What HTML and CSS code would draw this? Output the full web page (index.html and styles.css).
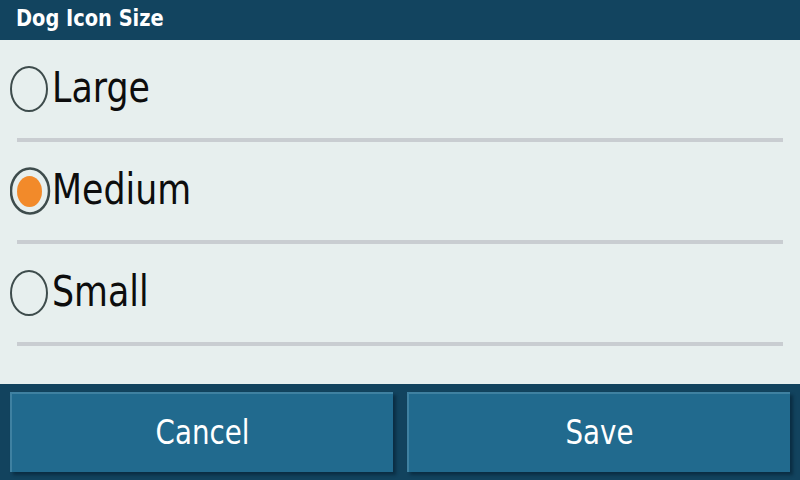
FILE: index.html
```html
<!DOCTYPE html>
<html>
<head>
<meta charset="utf-8">
<link rel="stylesheet" href="styles.css">
</head>
<body>
<div class="screen">
  <div class="titlebar"><span class="title">Dog Icon Size</span></div>
  <div class="content">
    <div class="row">
      <svg class="radio" width="42" height="48" viewBox="0 0 42 48"><ellipse cx="19" cy="24" rx="18" ry="22" fill="none" stroke="#3e4c4c" stroke-width="2"/></svg>
      <span class="label">Large</span>
    </div>
    <div class="divider"></div>
    <div class="row">
      <svg class="radio" width="42" height="48" viewBox="0 0 42 48"><ellipse cx="20" cy="24" rx="19" ry="22.5" fill="none" stroke="#3e4c4c" stroke-width="2.5"/><ellipse cx="19.5" cy="24.5" rx="12.5" ry="15.5" fill="#f28a2a"/></svg>
      <span class="label">Medium</span>
    </div>
    <div class="divider"></div>
    <div class="row">
      <svg class="radio" width="42" height="48" viewBox="0 0 42 48"><ellipse cx="19" cy="24" rx="18" ry="22" fill="none" stroke="#3e4c4c" stroke-width="2"/></svg>
      <span class="label">Small</span>
    </div>
    <div class="divider"></div>
  </div>
  <div class="footer">
    <button class="btn"><span class="btn-text">Cancel</span></button>
    <button class="btn"><span class="btn-text">Save</span></button>
  </div>
</div>
</body>
</html>
```
FILE: styles.css
```css
* { box-sizing: border-box; }
html, body { margin: 0; padding: 0; }
body {
  width: 800px;
  height: 480px;
  overflow: hidden;
  font-family: "DejaVu Sans", sans-serif;
  background: #e7efee;
}
.screen {
  width: 800px;
  height: 480px;
  display: flex;
  flex-direction: column;
}
.titlebar {
  height: 40px;
  background: #12445f;
  padding-left: 16px;
  display: flex;
  align-items: center;
}
.title {
  display: inline-block;
  color: #ffffff;
  font-weight: bold;
  font-size: 19.4px;
  line-height: 22px;
  transform: scaleY(1.2);
  margin-top: -2px;
}
.content {
  flex: 1;
  background: #e7efee;
}
.row {
  height: 98px;
  display: flex;
  align-items: center;
  padding-left: 10px;
}
.radio {
  display: block;
  flex: none;
  margin-top: 0;
}
.label {
  display: inline-block;
  font-size: 34.8px;
  line-height: 40px;
  color: #0d0d0d;
  transform: scaleY(1.2);
  margin-top: -2px;
}
.divider {
  height: 4px;
  margin: 0 17px;
  background: #c9cdd1;
}
.footer {
  height: 96px;
  background: #12435e;
  display: flex;
  gap: 14px;
  padding: 8px 10px;
}
.btn {
  flex: 1;
  height: 80px;
  margin: 0;
  padding: 0;
  border: none;
  border-top: 2px solid #3f81a1;
  border-left: 2px solid #3f81a1;
  background: #216a8e;
  box-shadow: 3px 3px 3px rgba(0, 20, 35, 0.45);
  color: #ffffff;
  font-family: "DejaVu Sans", sans-serif;
  display: flex;
  align-items: center;
  justify-content: center;
}
.btn-text {
  display: inline-block;
  font-size: 27.7px;
  line-height: 32px;
  transform: scaleY(1.22);
}
```
